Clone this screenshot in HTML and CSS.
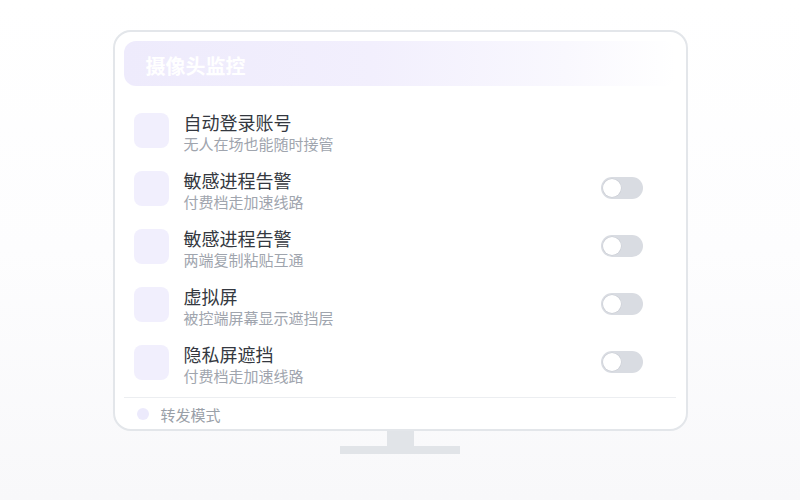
FILE: index.html
```html
<!DOCTYPE html>
<html lang="zh">
<head>
<meta charset="utf-8">
<title>摄像头监控</title>
<link rel="stylesheet" href="styles.css">
</head>
<body>
<div class="stage">
  <div class="monitor">
    <div class="header"><span class="title">摄像头监控</span></div>
    <div class="list">
      <div class="row">
        <div class="icon"></div>
        <div class="text"><div class="name">自动登录账号</div><div class="desc">无人在场也能随时接管</div></div>
      </div>
      <div class="row">
        <div class="icon"></div>
        <div class="text"><div class="name">敏感进程告警</div><div class="desc">付费档走加速线路</div></div>
        <div class="toggle"><span class="knob"></span></div>
      </div>
      <div class="row">
        <div class="icon"></div>
        <div class="text"><div class="name">敏感进程告警</div><div class="desc">两端复制粘贴互通</div></div>
        <div class="toggle"><span class="knob"></span></div>
      </div>
      <div class="row">
        <div class="icon"></div>
        <div class="text"><div class="name">虚拟屏</div><div class="desc">被控端屏幕显示遮挡层</div></div>
        <div class="toggle"><span class="knob"></span></div>
      </div>
      <div class="row">
        <div class="icon"></div>
        <div class="text"><div class="name">隐私屏遮挡</div><div class="desc">付费档走加速线路</div></div>
        <div class="toggle"><span class="knob"></span></div>
      </div>
    </div>
    <div class="footer"><span class="dot"></span><span class="footer-label">转发模式</span></div>
  </div>
  <div class="neck"></div>
  <div class="base"></div>
</div>
</body>
</html>
```

FILE: styles.css
```css
html, body {
  margin: 0;
  padding: 0;
}
body {
  width: 800px;
  height: 500px;
  background: linear-gradient(180deg, #ffffff 0%, #fdfdfe 50%, #f8f8fa 100%);
  font-family: "Noto Sans CJK SC", "Noto Sans", sans-serif;
  overflow: hidden;
}
.stage {
  padding-top: 30px;
  display: flex;
  flex-direction: column;
  align-items: center;
}
.monitor {
  box-sizing: border-box;
  width: 575px;
  height: 401px;
  border: 2px solid #e3e6ea;
  border-radius: 18px;
  background: #ffffff;
  padding: 9px 10px 0 9px;
  display: flex;
  flex-direction: column;
}
.header {
  box-sizing: border-box;
  height: 45px;
  flex: none;
  border-radius: 12px;
  background: linear-gradient(90deg, #eeebfc 0%, #f2effd 45%, #f9f8fe 80%, rgba(255,255,255,0) 100%);
  display: flex;
  align-items: center;
  padding: 5px 0 0 22px;
}
.title {
  color: #ffffff;
  font-size: 20px;
  font-weight: 700;
  line-height: 24px;
}
.list {
  margin-top: 27px;
  padding: 0 33px 0 10px;
  display: flex;
  flex-direction: column;
  gap: 16px;
}
.row {
  display: flex;
  align-items: flex-start;
  height: 42px;
}
.icon {
  width: 35px;
  height: 35px;
  border-radius: 8px;
  background: #f1effd;
  flex: none;
}
.text {
  margin-left: 15px;
  margin-top: -2px;
  flex: 1;
}
.name {
  font-size: 18px;
  line-height: 23px;
  color: #343840;
}
.desc {
  font-size: 15px;
  line-height: 20px;
  color: #a0a5ae;
}
.toggle {
  width: 42px;
  height: 22px;
  border-radius: 11px;
  background: #d9dce2;
  margin-top: 6px;
  flex: none;
  display: flex;
  align-items: center;
  padding-left: 2px;
  box-sizing: border-box;
}
.knob {
  width: 18px;
  height: 18px;
  border-radius: 50%;
  background: #ffffff;
  box-shadow: 0 0 0 0.5px #c9ccd3;
}
.footer {
  margin-top: 10px;
  border-top: 1px solid #eceef1;
  height: 32px;
  flex: none;
  display: flex;
  align-items: center;
  padding-left: 13px;
}
.dot {
  width: 12px;
  height: 12px;
  border-radius: 50%;
  background: #eceafc;
}
.footer-label {
  margin-left: 12px;
  font-size: 15px;
  color: #9aa0a8;
}
.neck {
  width: 27px;
  height: 15px;
  background: #e1e4e8;
}
.base {
  width: 120px;
  height: 8px;
  background: #e1e4e8;
}
```
